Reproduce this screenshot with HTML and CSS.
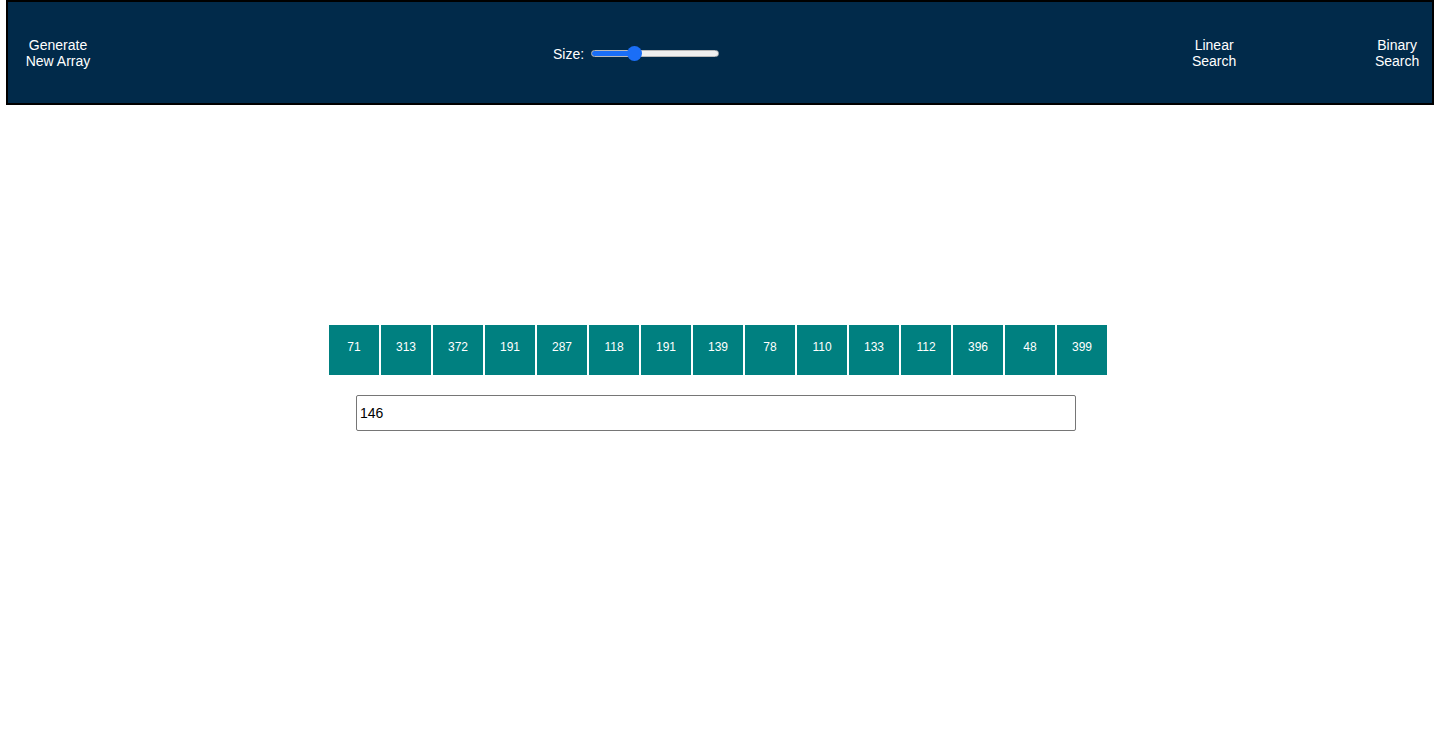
FILE: index.html
```html
<!DOCTYPE html>
<html lang="en">
<head>
<meta charset="utf-8">
<title>Search Visualizer</title>
<link rel="stylesheet" href="styles.css">
</head>
<body>
<nav class="navbar">
  <button class="nav-btn gen-btn">Generate<br>New Array</button>
  <div class="size-group">
    <span class="size-label">Size:</span>
    <input class="size-slider" type="range" min="5" max="40" value="16">
  </div>
  <button class="nav-btn linear-btn">Linear<br>Search</button>
  <button class="nav-btn binary-btn">Binary<br>Search</button>
</nav>
<main class="content">
  <div class="bars">
    <div class="bar">71</div>
    <div class="bar">313</div>
    <div class="bar">372</div>
    <div class="bar">191</div>
    <div class="bar">287</div>
    <div class="bar">118</div>
    <div class="bar">191</div>
    <div class="bar">139</div>
    <div class="bar">78</div>
    <div class="bar">110</div>
    <div class="bar">133</div>
    <div class="bar">112</div>
    <div class="bar">396</div>
    <div class="bar">48</div>
    <div class="bar">399</div>
  </div>
  <input class="search-input" type="text" value="146">
</main>
</body>
</html>
```
FILE: styles.css
```css
html, body {
  margin: 0;
  padding: 0;
  background: #ffffff;
  font-family: "Liberation Sans", Arial, Helvetica, sans-serif;
}

.navbar {
  margin: 0 4px 0 6px;
  height: 105px;
  box-sizing: border-box;
  background: #012a4a;
  border: 2px solid #000000;
  display: flex;
  align-items: center;
}

.nav-btn {
  background: transparent;
  border: none;
  padding: 0;
  color: #ffffff;
  font-family: "Liberation Sans", Arial, Helvetica, sans-serif;
  font-size: 14px;
  line-height: 16px;
  text-align: center;
  cursor: pointer;
}

.gen-btn {
  width: 100px;
  margin-left: 0;
}

.size-group {
  display: flex;
  align-items: center;
  margin-left: 445px;
  color: #ffffff;
  font-size: 14px;
}

.size-label {
  margin-right: 7px;
  position: relative;
  top: 1px;
}

.size-slider {
  -webkit-appearance: none;
  appearance: none;
  width: 128px;
  height: 7px;
  margin: 2px 0 0 0;
  border-radius: 4px;
  border: 1px solid #b9b9b9;
  box-sizing: border-box;
  background: linear-gradient(to right, #1a6ef7 0%, #1a6ef7 37%, #efefef 37%, #efefef 100%);
  outline: none;
}

.size-slider::-webkit-slider-thumb {
  -webkit-appearance: none;
  appearance: none;
  width: 15px;
  height: 15px;
  border-radius: 50%;
  background: #1a6ef7;
  border: none;
}

.linear-btn {
  width: 60px;
  margin-left: 465px;
}

.binary-btn {
  width: 60px;
  margin-left: 123px;
}

.content {
  display: flex;
  flex-direction: column;
  align-items: center;
  padding-top: 220px;
}

.bars {
  display: flex;
  margin-left: -2px;
}

.bar {
  width: 50px;
  height: 50px;
  margin: 0 1px;
  box-sizing: border-box;
  padding-top: 15px;
  background: #008080;
  color: #ffffff;
  font-size: 12px;
  line-height: 14px;
  text-align: center;
}

.search-input {
  margin-top: 20px;
  margin-left: -6px;
  width: 720px;
  height: 36px;
  box-sizing: border-box;
  border: 1px solid #767676;
  border-radius: 2px;
  padding: 0 3px;
  font-family: "Liberation Sans", Arial, Helvetica, sans-serif;
  font-size: 14px;
  color: #000000;
}
```
